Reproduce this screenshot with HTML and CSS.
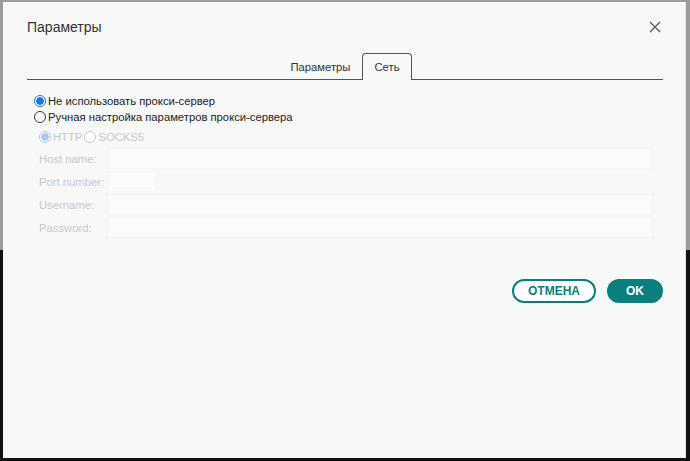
FILE: index.html
```html
<!DOCTYPE html>
<html lang="ru">
<head>
    <meta charset="UTF-8">
    <title>Параметры</title>
    <link rel="stylesheet" href="styles.css">
</head>
<body>
    <div class="dialog">
        <div class="dialog-header">
            <h1>Параметры</h1>
            <span class="close">
                <svg width="12" height="12" viewBox="0 0 12 12"><path d="M1 1L11 11M11 1L1 11" stroke="#555" stroke-width="1.2" fill="none"/></svg>
            </span>
        </div>

        <div class="tabs">
            <div class="tab">Параметры</div>
            <div class="tab active">Сеть</div>
        </div>

        <div class="proxy">
            <label class="radio"><span class="dot checked"></span>Не использовать прокси-сервер</label>
            <label class="radio"><span class="dot"></span>Ручная настройка параметров прокси-сервера</label>

            <div class="manual">
                <div class="protocols">
                    <label class="radio disabled"><span class="dot checked"></span>HTTP</label>
                    <label class="radio disabled"><span class="dot"></span>SOCKS5</label>
                </div>
                <div class="field"><span class="field-label">Host name:</span><span class="input"></span></div>
                <div class="field"><span class="field-label">Port number:</span><span class="input short"></span></div>
                <div class="field"><span class="field-label">Username:</span><span class="input"></span></div>
                <div class="field"><span class="field-label">Password:</span><span class="input"></span></div>
            </div>
        </div>

        <div class="actions">
            <button class="btn outline">ОТМЕНА</button>
            <button class="btn filled">OK</button>
        </div>
    </div>
</body>
</html>
```

FILE: styles.css
```css
body {
    margin: 0;
    height: 461px;
    overflow: hidden;
    font-family: "Liberation Sans", Arial, sans-serif;
    background: linear-gradient(#9c9c9c 0, #9c9c9c 250px, #111 250px);
}
.dialog {
    margin: 2px 4px 0 3px;
    height: 456px;
    box-sizing: border-box;
    background: #f7f8f8;
    padding: 0 22px 0 24px;
    border-right: 1px solid #e2e4e4;
}
.dialog-header {
    display: flex;
    justify-content: space-between;
    align-items: center;
    height: 50px;
}
h1 {
    margin: 0;
    font-size: 14px;
    font-weight: normal;
    color: #333;
}
.close {
    display: flex;
    margin-right: 2px;
}
.tabs {
    display: flex;
    justify-content: center;
    border-bottom: 1px solid #555;
    margin-top: 1px;
}
.tab {
    font-size: 11.25px;
    color: #333;
    padding: 6px 11px 5px;
    line-height: 14px;
    border: 1px solid transparent;
    border-bottom: 0;
}
.tab.active {
    border-color: #555;
    border-radius: 4px 4px 0 0;
    background: #f7f8f8;
    margin-bottom: -1px;
    padding-bottom: 6px;
}
.proxy {
    padding: 13px 0 0 7px;
}
.radio {
    display: flex;
    align-items: center;
    font-size: 11.25px;
    color: #222;
    height: 16px;
}
.dot {
    width: 10px;
    height: 10px;
    border: 1px solid #333;
    border-radius: 50%;
    margin-right: 2px;
    background: #fff;
}
.dot.checked {
    border-color: #1a73e8;
    background: radial-gradient(circle, #1a73e8 0, #1a73e8 3.5px, #fff 4px);
}
.manual {
    padding-left: 5px;
}
.protocols {
    display: flex;
    margin: 4px 0 2px;
}
.radio.disabled {
    color: #c8c8c8;
    margin-right: 2px;
}
.radio.disabled .dot {
    border-color: #c8c8c8;
}
.radio.disabled .dot.checked {
    border-color: #a8c7ef;
    background: radial-gradient(circle, #a8c7ef 0, #a8c7ef 3.5px, #fff 4px);
}
.field {
    display: flex;
    align-items: center;
    height: 23px;
}
.field-label {
    width: 68px;
    white-space: nowrap;
    font-size: 11.25px;
    color: #c8c8c8;
}
.input {
    flex: 1;
    height: 19px;
    margin-right: 10px;
    background: #fafbfb;
    border: 1px solid #f3f4f4;
}
.input.short {
    flex: none;
    width: 48px;
}
.actions {
    display: flex;
    justify-content: flex-end;
    gap: 11px;
    margin-top: 40px;
}
.btn {
    font-family: "Liberation Sans", Arial, sans-serif;
    font-size: 12px;
    font-weight: bold;
    height: 24px;
    border-radius: 12px;
    border: 2px solid #0b7f80;
    cursor: pointer;
}
.btn.outline {
    width: 84px;
    background: #fff;
    color: #0b7f80;
}
.btn.filled {
    width: 56px;
    background: #0b7f80;
    color: #fff;
}
```
